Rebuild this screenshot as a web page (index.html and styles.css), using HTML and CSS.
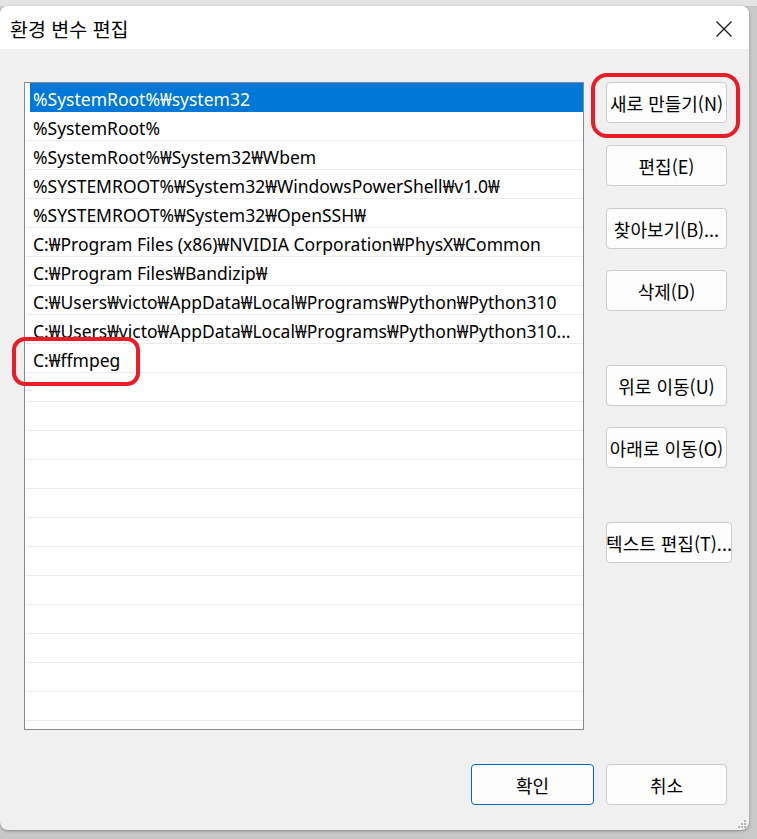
FILE: index.html
```html
<!DOCTYPE html>
<html lang="ko">
<head>
<meta charset="utf-8">
<title>환경 변수 편집</title>
<link rel="stylesheet" href="styles.css">
</head>
<body>
<div class="screen">
  <div class="window">
    <div class="titlebar">
      <span class="title">환경 변수 편집</span>
      <svg class="close" width="16" height="16" viewBox="0 0 16 16"><path d="M0.5 0.5 L15.5 15.5 M15.5 0.5 L0.5 15.5" stroke="#1a1a1a" stroke-width="1.3" fill="none"/></svg>
    </div>
    <div class="content">
      <div class="main">
        <div class="list">
          <div class="row selected">%SystemRoot%₩system32</div>
          <div class="row">%SystemRoot%</div>
          <div class="row">%SystemRoot%₩System32₩Wbem</div>
          <div class="row">%SYSTEMROOT%₩System32₩WindowsPowerShell₩v1.0₩</div>
          <div class="row">%SYSTEMROOT%₩System32₩OpenSSH₩</div>
          <div class="row">C:₩Program Files (x86)₩NVIDIA Corporation₩PhysX₩Common</div>
          <div class="row">C:₩Program Files₩Bandizip₩</div>
          <div class="row">C:₩Users₩victo₩AppData₩Local₩Programs₩Python₩Python310</div>
          <div class="row">C:₩Users₩victo₩AppData₩Local₩Programs₩Python₩Python310...</div>
          <div class="row">C:₩ffmpeg</div>
          <div class="row"></div><div class="row"></div><div class="row"></div><div class="row"></div>
          <div class="row"></div><div class="row"></div><div class="row"></div><div class="row"></div>
          <div class="row"></div><div class="row"></div><div class="row"></div><div class="row"></div>
          <div class="row"></div>
        </div>
        <div class="side">
          <button class="btn b-new">새로 만들기(N)</button>
          <button class="btn b-gap">편집(E)</button>
          <button class="btn b-gap">찾아보기(B)...</button>
          <button class="btn b-gap1">삭제(D)</button>
          <button class="btn b-big">위로 이동(U)</button>
          <button class="btn b-gap1">아래로 이동(O)</button>
          <button class="btn b-big wide">텍스트 편집(T)...</button>
        </div>
      </div>
      <div class="footer">
        <button class="btn ok">확인</button>
        <button class="btn">취소</button>
      </div>
      <svg class="grip" width="10" height="10" viewBox="0 0 10 10" fill="#b5b5b5">
        <rect x="7" y="1" width="2" height="2"/>
        <rect x="4" y="4" width="2" height="2"/><rect x="7" y="4" width="2" height="2"/>
        <rect x="1" y="7" width="2" height="2"/><rect x="4" y="7" width="2" height="2"/><rect x="7" y="7" width="2" height="2"/>
      </svg>
    </div>
    <div class="mark mark-new"></div>
    <div class="mark mark-ffmpeg"></div>
  </div>
</div>
</body>
</html>
```

FILE: styles.css
```css
* { box-sizing: border-box; }
html, body { margin: 0; padding: 0; }
body {
  background: #cdcdcd;
  font-family: "Noto Sans", "Noto Sans CJK KR", sans-serif;
  color: #000;
}
.screen {
  width: 757px;
  height: 839px;
  overflow: hidden;
  padding-top: 6px;
  background: linear-gradient(#e4e4e4 0, #e4e4e4 6px, #c9c9c9 6px);
}
.window {
  position: relative;
  width: 749px;
  height: 824px;
  background: #f0f0f0;
  border-radius: 8px;
  box-shadow: 0 1px 3px rgba(0,0,0,0.35);
  display: flex;
  flex-direction: column;
  overflow: hidden;
}
.titlebar {
  height: 43px;
  background: #fff;
  display: flex;
  align-items: center;
  justify-content: space-between;
  padding: 0 17px 0 10px;
}
.title {
  font-family: "Noto Sans CJK KR", sans-serif;
  font-size: 19.5px;
  padding-top: 1px;
}
.close { display: block; margin-top: 3px; }
.content {
  position: relative;
  flex: 1;
  padding: 33px 0 0 24px;
  display: flex;
  flex-direction: column;
}
.main { display: flex; }
.list {
  width: 560px;
  height: 648px;
  border: 1px solid #868a91;
  background: #fff;
  overflow: hidden;
}
.row {
  height: 29px;
  margin-left: 1px;
  padding-left: 7px;
  padding-top: 2px;
  border-bottom: 1px solid #ececec;
  font-size: 17.5px;
  line-height: 28px;
  white-space: nowrap;
  overflow: hidden;
}
.row.selected {
  margin-left: 5px;
  padding-left: 3px;
  background: #0078d7;
  color: #fff;
  border-bottom-color: #0078d7;
}
.side {
  display: flex;
  flex-direction: column;
  align-items: flex-start;
  margin-left: 22px;
}
.btn {
  width: 121px;
  height: 41px;
  padding: 1px 0 0;
  border: 1px solid #cccccc;
  border-radius: 4px;
  background: #fdfdfd;
  font-family: "Noto Sans CJK KR", sans-serif;
  font-size: 18px;
  color: #000;
  white-space: nowrap;
  overflow: visible;
  display: flex;
  align-items: center;
  justify-content: center;
}
.b-new { margin-top: 0; }
.b-gap { margin-top: 22px; }
.b-gap1 { margin-top: 21px; }
.b-big { margin-top: 54px; }
.wide { width: 126px; }
.footer {
  display: flex;
  justify-content: flex-end;
  gap: 12px;
  padding-right: 22px;
  margin-top: 34px;
}
.ok {
  width: 123px;
  border: 1.5px solid #0067c0;
}
.grip { position: absolute; right: 2px; bottom: 1px; }
.mark {
  position: absolute;
  border: 4px solid #ea1c27;
}
.mark-new {
  left: 591px;
  top: 67px;
  width: 149px;
  height: 65px;
  border-radius: 16px;
}
.mark-ffmpeg {
  left: 12px;
  top: 331px;
  width: 128px;
  height: 49px;
  border-radius: 13px;
}
```
